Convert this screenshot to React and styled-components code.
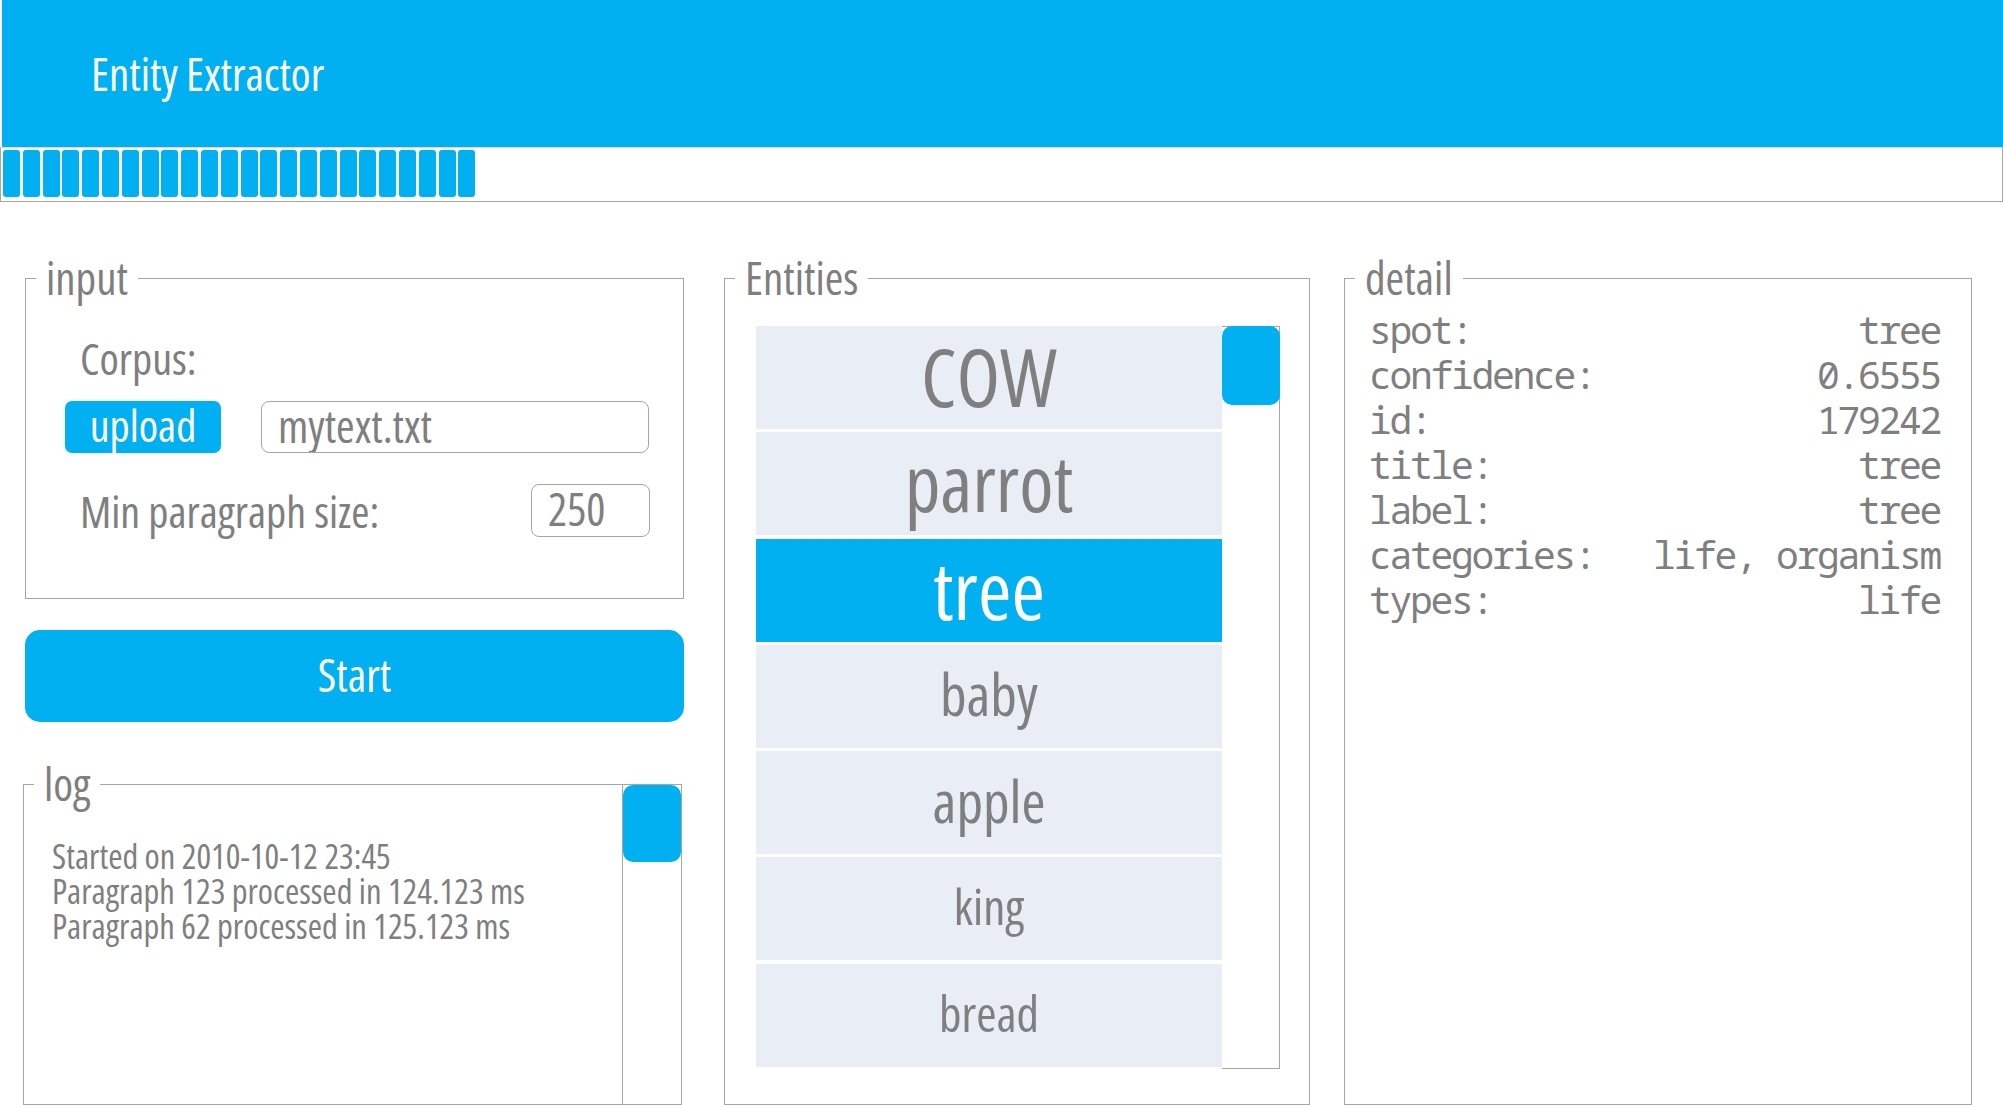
import React from "react";
import styled, { createGlobalStyle } from "styled-components";

const BLUE = "#00B0F0";
const GREY_TEXT = "#7F7F7F";
const LINE = "#A6A6A6";

const Global = createGlobalStyle`
  html, body {
    margin: 0;
    overflow: hidden;
    background: #fff;
  }
  body {
    font-family: "Open Sans", "Liberation Sans", sans-serif;
    font-stretch: 75%;
    color: ${GREY_TEXT};
  }
  * { box-sizing: border-box; }
`;

const Page = styled.div`
  width: 2003px;
  height: 1105px;
`;

const Header = styled.div`
  height: 147px;
  margin-left: 2px;
  background: ${BLUE};
  display: flex;
  align-items: center;
  padding-left: 89px;
`;

const Title = styled.div`
  color: #fff;
  font-size: 45px;
  line-height: 1;
`;

const Progress = styled.div`
  height: 55px;
  border: 1px solid ${LINE};
  border-top-color: #d9d9d9;
  padding: 2px 0 4px 2px;
  display: flex;
  gap: 2.8px;
`;

const Segment = styled.div`
  width: 17px;
  height: 100%;
  background: ${BLUE};
  border-radius: 3px;
`;

const Main = styled.div`
  display: flex;
  align-items: flex-start;
  padding-left: 23px;
  margin-top: 76px;
`;

const Columns = styled.div`
  width: 660px;
  flex-shrink: 0;
  display: flex;
  flex-direction: column;
`;

const Panel = styled.div`
  position: relative;
  flex-shrink: 0;
  border: 1px solid ${LINE};
  height: ${p => p.h}px;
  width: ${p => p.w}px;
  margin-left: ${p => p.shift || 0}px;
  margin-top: ${p => p.top || 0}px;
`;

const Legend = styled.div`
  position: absolute;
  top: -23px;
  left: 10px;
  padding: 0 10px 0 10px;
  background: #fff;
  font-size: 45px;
  line-height: 44px;
  color: ${GREY_TEXT};
`;

const InputBody = styled.div`
  display: flex;
  flex-direction: column;
  padding: 53px 33px 0 39px;
`;

const Label = styled.div`
  font-size: 44px;
  line-height: 52px;
  padding-left: 15px;
  flex: 1;
`;

const FieldRow = styled.div`
  display: flex;
  align-items: center;
  gap: 40px;
  margin-top: ${p => p.top}px;
`;

const UploadButton = styled.button`
  width: 156px;
  height: 52px;
  border: none;
  border-radius: 7px;
  background: ${BLUE};
  color: #fff;
  font: inherit;
  font-size: 44px;
  line-height: 1;
  padding: 0 0 4px;
`;

const TextBox = styled.input`
  width: ${p => p.w}px;
  height: ${p => p.h}px;
  border: 1px solid ${LINE};
  border-radius: 8px;
  padding: 0 0 4px 16px;
  font: inherit;
  font-size: 45px;
  color: ${GREY_TEXT};
  background: #fff;
  outline: none;
`;

const StartButton = styled.button`
  width: 659px;
  height: 92px;
  margin-top: 31px;
  margin-left: 2px;
  border: none;
  border-radius: 15px;
  background: ${BLUE};
  color: #fff;
  font: inherit;
  font-size: 45px;
  padding: 0 0 4px;
`;

const LogInner = styled.div`
  display: flex;
  height: 100%;
`;

const LogText = styled.div`
  flex: 1;
  padding: 53px 0 0 28px;
  font-size: 34.5px;
  line-height: 35px;
`;

const Track = styled.div`
  width: ${p => p.w}px;
  border-left: ${p => (p.left ? `1px solid ${LINE}` : "none")};
  border-right: ${p => (p.boxed ? `1px solid ${LINE}` : "none")};
  border-top: ${p => (p.boxed ? `1px solid ${LINE}` : "none")};
  border-bottom: ${p => (p.boxed ? `1px solid ${LINE}` : "none")};
  height: ${p => (p.h ? `${p.h}px` : "auto")};
`;

const Thumb = styled.div`
  height: ${p => p.h}px;
  background: ${BLUE};
  border-radius: 10px;
  margin: ${p => (p.boxed ? "-1px -1px 0 0" : "0")};
`;

const EntitiesBody = styled.div`
  display: flex;
  padding: 47px 0 0 31px;
`;

const List = styled.div`
  width: 466px;
  display: flex;
  flex-direction: column;
  gap: 3.3px;
`;

const Row = styled.div`
  height: 103px;
  display: flex;
  align-items: center;
  justify-content: center;
  background: ${p => (p.active ? BLUE : "#E9EDF6")};
  color: ${p => (p.active ? "#fff" : GREY_TEXT)};
  font-size: ${p => p.size}px;
  line-height: 1;
  padding-bottom: 4px;
`;

const DetailBody = styled.div`
  padding: 28px 31px 0 24px;
  font-family: "Noto Sans Mono", "DejaVu Sans Mono", monospace;
  font-stretch: 100%;
  font-size: 38px;
  letter-spacing: -2.3px;
`;

const DetailRow = styled.div`
  display: flex;
  justify-content: space-between;
  height: 45px;
  line-height: 45px;
  white-space: pre;
`;

const entities = [
  { name: "COW", size: 80 },
  { name: "parrot", size: 78 },
  { name: "tree", size: 81, active: true },
  { name: "baby", size: 58 },
  { name: "apple", size: 58 },
  { name: "king", size: 49 },
  { name: "bread", size: 49 },
];

const details = [
  ["spot:", "tree"],
  ["confidence:", "0.6555"],
  ["id:", "179242"],
  ["title:", "tree"],
  ["label:", "tree"],
  ["categories:", "life, organism"],
  ["types:", "life"],
];

const log = [
  "Started on 2010-10-12 23:45",
  "Paragraph 123 processed in 124.123 ms",
  "Paragraph 62 processed in 125.123 ms",
];

export default function App() {
  return (
    <Page>
      <Global />
      <Header>
        <Title>Entity Extractor</Title>
      </Header>
      <Progress>
        {Array.from({ length: 24 }).map((_, i) => (
          <Segment key={i} />
        ))}
      </Progress>

      <Main>
        <Columns>
          <Panel h={321} w={659} shift={2}>
            <Legend>input</Legend>
            <InputBody>
              <Label>Corpus:</Label>
              <FieldRow top={17}>
                <UploadButton>upload</UploadButton>
                <TextBox w={388} h={52} value="mytext.txt" readOnly />
              </FieldRow>
              <FieldRow top={31}>
                <Label>Min paragraph size:</Label>
                <TextBox w={119} h={53} value="250" readOnly />
              </FieldRow>
            </InputBody>
          </Panel>

          <StartButton>Start</StartButton>

          <Panel h={321} w={659} top={62}>
            <Legend>log</Legend>
            <LogInner>
              <LogText>
                {log.map((l, i) => (
                  <div key={i}>{l}</div>
                ))}
              </LogText>
              <Track w={59} left>
                <Thumb h={77} />
              </Track>
            </LogInner>
          </Panel>
        </Columns>

        <Panel h={827} w={586} shift={41}>
          <Legend>Entities</Legend>
          <EntitiesBody>
            <List>
              {entities.map(e => (
                <Row key={e.name} size={e.size} active={e.active}>
                  {e.name}
                </Row>
              ))}
            </List>
            <Track w={58} h={743} boxed>
              <Thumb h={79} boxed />
            </Track>
          </EntitiesBody>
        </Panel>

        <Panel h={827} w={628} shift={34}>
          <Legend>detail</Legend>
          <DetailBody>
            {details.map(([k, v]) => (
              <DetailRow key={k}>
                <span>{k}</span>
                <span>{v}</span>
              </DetailRow>
            ))}
          </DetailBody>
        </Panel>
      </Main>
    </Page>
  );
}
